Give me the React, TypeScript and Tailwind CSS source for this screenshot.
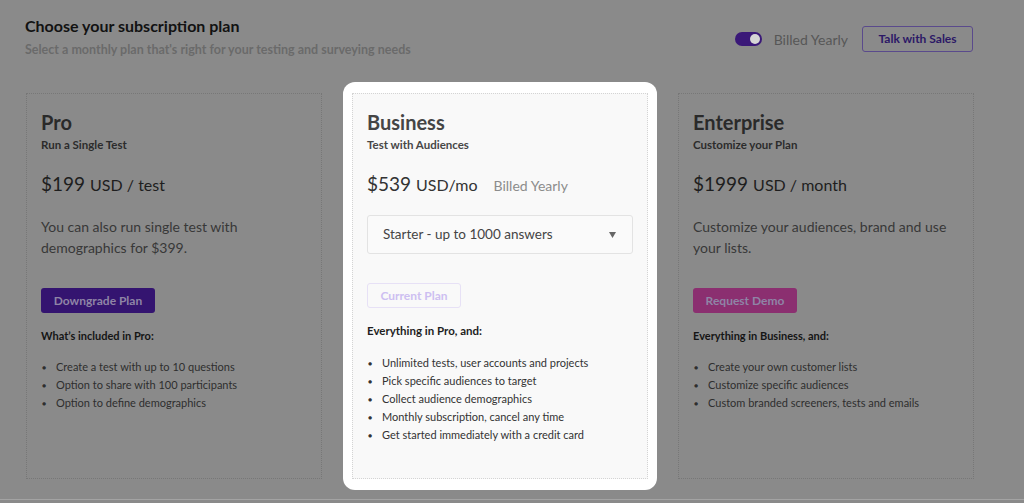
import React from "react";

const font = { fontFamily: "Lato, 'Open Sans', Arial, sans-serif" };

type Plan = {
  name: string;
  tagline: string;
  price: string;
  unit: string;
  blurb: string;
  button: string;
  buttonClass: string;
  listTitle: string;
  items: string[];
};

const pro: Plan = {
  name: "Pro",
  tagline: "Run a Single Test",
  price: "$199",
  unit: "USD / test",
  blurb: "You can also run single test with demographics for $399.",
  button: "Downgrade Plan",
  buttonClass: "bg-[#341470] w-[114px]",
  listTitle: "What\u2019s included in Pro:",
  items: [
    "Create a test with up to 10 questions",
    "Option to share with 100 participants",
    "Option to define demographics"
  ]
};

const enterprise: Plan = {
  name: "Enterprise",
  tagline: "Customize your Plan",
  price: "$1999",
  unit: "USD / month",
  blurb: "Customize your audiences, brand and use your lists.",
  button: "Request Demo",
  buttonClass: "bg-[#8b2f70] w-[104px]",
  listTitle: "Everything in Business, and:",
  items: [
    "Create your own customer lists",
    "Customize specific audiences",
    "Custom branded screeners, tests and emails"
  ]
};

const businessItems = [
  "Unlimited tests, user accounts and projects",
  "Pick specific audiences to target",
  "Collect audience demographics",
  "Monthly subscription, cancel any time",
  "Get started immediately with a credit card"
];

function Bullets({ items, color }: { items: string[]; color: string }) {
  return (
    <ul className="flex flex-col">
      {items.map((item) => (
        <li key={item} className={`flex h-[18px] items-center text-[11px] ${color}`}>
          <span className="w-[15px] pl-[1px] text-[7px] leading-none">●</span>
          <span>{item}</span>
        </li>
      ))}
    </ul>
  );
}

function DimCard({ plan }: { plan: Plan }) {
  return (
    <div className="h-[386px] w-[296px] border border-dotted border-[#777] px-[14px] pt-[16px]">
      <h2 className="text-[20px] font-bold leading-[24px] text-[#2a2a2a]">{plan.name}</h2>
      <p className="mt-[4px] text-[11.5px] font-bold leading-[14px] text-[#2c2c2c]">{plan.tagline}</p>
      <p className="mt-[20px] flex items-baseline leading-[24px] text-[#1e1e1e]">
        <span className="text-[19px]">{plan.price}</span>
        <span className="ml-[5px] text-[16px]">{plan.unit}</span>
      </p>
      <p className="mt-[19px] text-[14px] leading-[21px] text-[#383838]">{plan.blurb}</p>
      <button
        className={`mt-[30px] flex h-[25px] items-center justify-center rounded-[3px] text-[12px] font-bold text-[#8f84a6] ${plan.buttonClass}`}
      >
        {plan.button}
      </button>
      <p className="mt-[16px] text-[11px] font-bold leading-[14px] text-[#151515]">{plan.listTitle}</p>
      <div className="mt-[15px]">
        <Bullets items={plan.items} color="text-[#2e2e2e]" />
      </div>
    </div>
  );
}

function BusinessCard() {
  return (
    <div className="relative -my-[11px] rounded-[12px] bg-white px-[9px] py-[11px]">
      <div className="h-[386px] w-[296px] border border-dotted border-[#d4d4d4] bg-[#f9f9f9] px-[14px] pt-[16px]">
        <h2 className="text-[20px] font-bold leading-[24px] text-[#454545]">Business</h2>
        <p className="mt-[4px] text-[11.5px] font-bold leading-[14px] text-[#474747]">Test with Audiences</p>
        <p className="mt-[20px] flex items-baseline leading-[24px] text-[#333]">
          <span className="text-[19px]">$539</span>
          <span className="ml-[5px] text-[16px]">USD/mo</span>
          <span className="ml-[16px] text-[14px] text-[#8c8c8c]">Billed Yearly</span>
        </p>
        <div className="mt-[17px] flex h-[39px] w-[266px] items-center justify-between rounded-[3px] border border-[#e3e3e3] bg-[#fafafa] pl-[15px] pr-[16px] text-[13.5px] text-[#444]">
          <span>Starter - up to 1000 answers</span>
          <svg width="7" height="6" viewBox="0 0 7 6">
            <path d="M0 0 L7 0 L3.5 6 Z" fill="#666" />
          </svg>
        </div>
        <button className="mt-[29px] flex h-[25px] w-[94px] items-center justify-center rounded-[3px] border border-[#e7e1f6] text-[12px] font-bold text-[#cdbff1]">
          Current Plan
        </button>
        <p className="mt-[16px] text-[11.5px] font-bold leading-[14px] text-[#1e1e1e]">Everything in Pro, and:</p>
        <div className="mt-[16px]">
          <Bullets items={businessItems} color="text-[#333]" />
        </div>
      </div>
    </div>
  );
}

export default function App() {
  return (
    <div style={font} className="h-[503px] w-[1024px] overflow-hidden bg-[#8a8a8a]">
      <div className="flex h-[500px] flex-col border-b border-[#a3a3a3]">
        <header className="flex items-start justify-between pl-[25px] pr-[51px] pt-[17px]">
          <div>
            <h1 className="text-[16px] font-bold leading-[18px] text-[#121212]">Choose your subscription plan</h1>
            <p className="mt-[8px] text-[12.5px] font-bold leading-[14px] text-[#6a6a6a]">
              Select a monthly plan that's right for your testing and surveying needs
            </p>
          </div>
          <div className="mt-[9px] flex items-center">
            <div className="flex h-[14px] w-[27px] items-center justify-end rounded-full bg-[#3a1878] pr-[2px]">
              <div className="h-[10px] w-[10px] rounded-full bg-[#d6d6d6]" />
            </div>
            <span className="ml-[12px] text-[14px] text-[#575757]">Billed Yearly</span>
            <button className="ml-[14px] flex h-[26px] w-[111px] items-center justify-center rounded-[3px] border border-[#5a4a8c] text-[12px] font-bold text-[#2c1866]">
              Talk with Sales
            </button>
          </div>
        </header>
        <main className="mt-[36px] flex items-start gap-[21px] pl-[26px]">
          <DimCard plan={pro} />
          <BusinessCard />
          <DimCard plan={enterprise} />
        </main>
      </div>
    </div>
  );
}
